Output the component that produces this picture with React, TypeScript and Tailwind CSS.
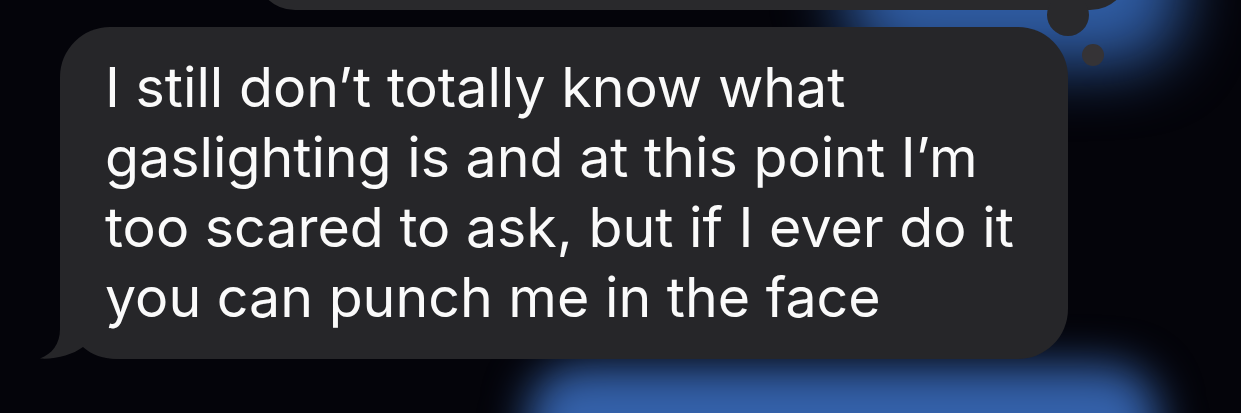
import React from 'react';

const lines = [
  'I still don’t totally know what',
  'gaslighting is and at this point I’m',
  'too scared to ask, but if I ever do it',
  'you can punch me in the face',
];

export default function App() {
  return (
    <div className="relative w-[1241px] h-[413px] overflow-hidden bg-[#04040a]">
      {/* blurred blue bubbles further up and down the thread */}
      <div className="absolute left-[845px] top-[-150px] w-[335px] h-[215px] rounded-[60px] bg-[#2f5ca3] blur-[32px]" />
      <div className="absolute left-[528px] top-[366px] w-[630px] h-[140px] rounded-[50px] bg-[#3461aa] blur-[22px]" />

      <div className="relative flex flex-col">
        {/* previous message, cut off at the top */}
        <div className="relative ml-[255px] -mt-[70px] w-[875px] h-[80px] rounded-[50px] bg-[#29292c]">
          <div className="absolute left-[792px] top-[64px] w-[42px] h-[42px] rounded-full bg-[#29292c]" />
          <div className="absolute left-[827px] top-[114px] w-[22px] h-[22px] rounded-full bg-[#353336]" />
        </div>

        {/* incoming message bubble */}
        <div className="relative mt-[17px] ml-[60px] w-[1008px] rounded-[50px] rounded-bl-[60px] bg-[#262629] pl-[45px] pt-[25px] pb-[27px]">
          <svg
            className="absolute left-[-22px] bottom-0 w-[82px] h-[60px]"
            viewBox="0 0 82 60"
          >
            <path
              d="M22 0 L22 30 C22 45 14 55 2 59.5 C18 60.5 34 56 45 48 C54 56 64 60 82 60 L82 0 Z"
              fill="#262629"
            />
          </svg>
          <p className="relative text-[55.5px] leading-[70px] text-[#fafafa] font-['Inter',sans-serif]">
            {lines.map((line) => (
              <span key={line} className="block whitespace-nowrap">
                {line}
              </span>
            ))}
          </p>
        </div>
      </div>
    </div>
  );
}
